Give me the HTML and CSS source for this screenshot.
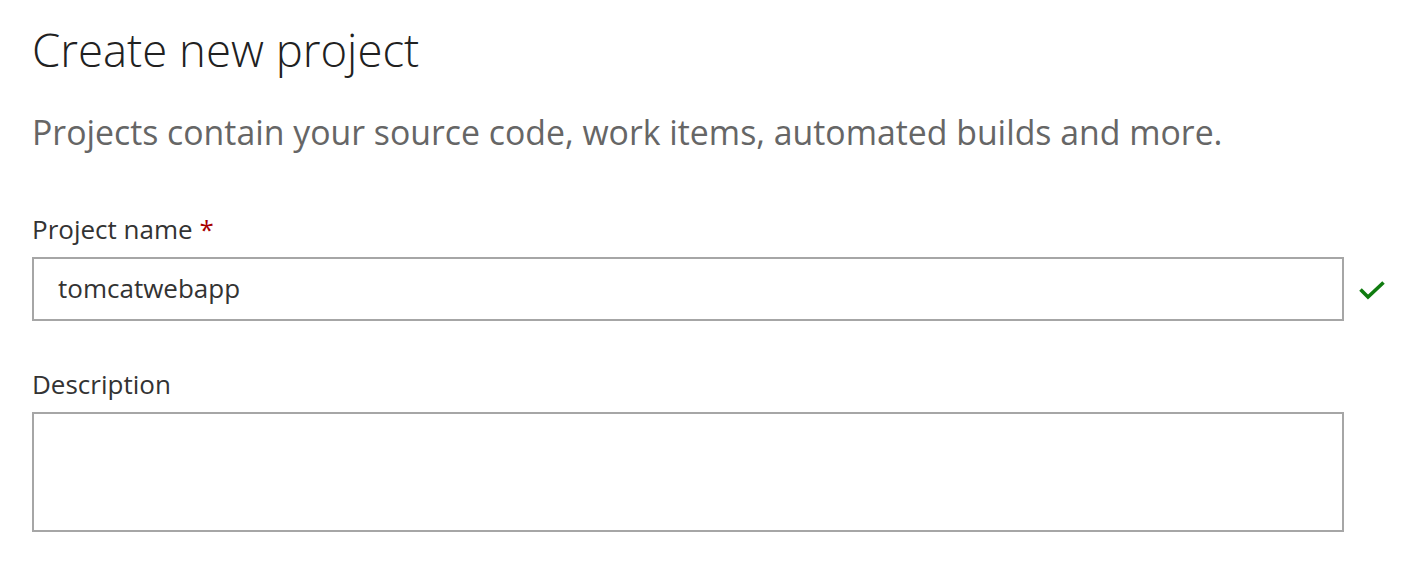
FILE: index.html
```html
<!DOCTYPE html>
<html lang="en">
<head>
<meta charset="utf-8">
<title>Create new project</title>
<link rel="stylesheet" href="styles.css">
</head>
<body>
<main class="page">
  <h1 class="title">Create new project</h1>
  <p class="subtitle">Projects contain your source code, work items, automated builds and more.</p>
  <div class="field">
    <label class="label" for="pname">Project name <span class="req">*</span></label>
    <div class="input-row">
      <div class="input" id="pname">tomcatwebapp</div>
      <svg class="check" width="30" height="20" viewBox="0 0 30 20" aria-hidden="true">
        <path d="M2.5 8.5 L10 16 L25.5 1.5" fill="none" stroke="#107c10" stroke-width="3.6"/>
      </svg>
    </div>
  </div>
  <div class="field field-desc">
    <label class="label" for="pdesc">Description</label>
    <div class="input-row">
      <div class="textarea" id="pdesc"></div>
    </div>
  </div>
</main>
</body>
</html>
```
FILE: styles.css
```css
html, body {
  margin: 0;
  padding: 0;
  background: #ffffff;
}
body {
  font-family: "Open Sans", "Noto Sans", sans-serif;
  color: #333333;
}
.page {
  padding: 19px 0 0 32px;
  width: 1370px;
}
.title {
  margin: 0;
  font-size: 45.5px;
  font-weight: 300;
  line-height: 60px;
  color: #212121;
}
.subtitle {
  margin: 30px 0 0 0;
  font-size: 33.8px;
  font-weight: 400;
  line-height: 46px;
  color: #666666;
}
.field {
  margin-top: 56px;
}
.field-desc {
  margin-top: 45px;
}
.label {
  display: block;
  font-size: 26px;
  line-height: 36px;
  color: #333333;
}
.req {
  color: #a80000;
}
.input-row {
  display: flex;
  align-items: center;
  margin-top: 10px;
}
.input {
  box-sizing: border-box;
  flex: 0 0 1312px;
  height: 64px;
  border: 2px solid #a6a6a6;
  padding: 0 24px;
  font-size: 26px;
  line-height: 58px;
  color: #333333;
}
.textarea {
  box-sizing: border-box;
  flex: 0 0 1312px;
  height: 120px;
  border: 2px solid #a6a6a6;
}
.check {
  flex: 0 0 auto;
  margin-left: 14px;
  margin-top: 4px;
  display: block;
}
```
